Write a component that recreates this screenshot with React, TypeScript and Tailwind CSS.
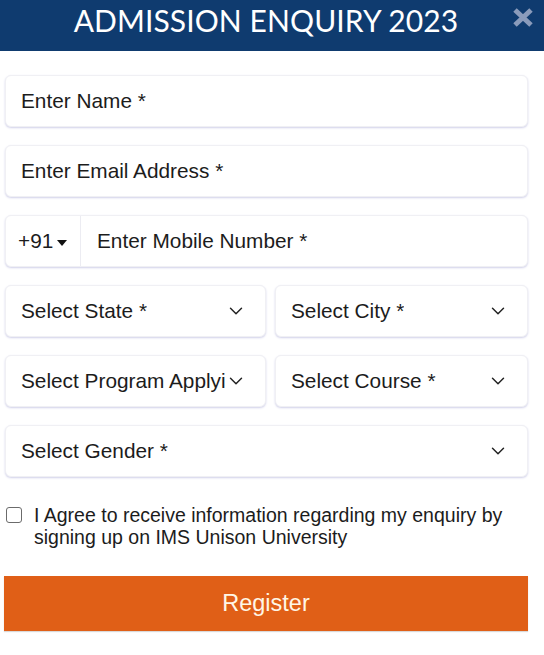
import { ChevronDown } from "lucide-react";

const field =
  "h-[52px] bg-white rounded-md border border-[#f0f0f4] shadow-[0_1px_2px_rgba(70,70,170,0.25)] flex items-center text-[20.8px] text-[#1c1c1c]";

const Select = ({ label, className = "" }: { label: string; className?: string }) => (
  <div className={`${field} pl-[15px] pr-[18px] justify-between ${className}`}>
    <span className="whitespace-nowrap overflow-hidden">{label}</span>
    <ChevronDown size={22} strokeWidth={1.6} className="shrink-0 text-[#222]" />
  </div>
);

const App = () => {
  return (
    <div className="w-[544px] h-[655px] bg-white font-['Liberation_Sans',Arial,sans-serif] overflow-hidden">
      <div className="h-[51px] bg-[#0f3b6f] relative flex justify-center pt-[1px]">
        <h1 className="font-['Lato',sans-serif] text-[30px] leading-[38px] text-white tracking-[0.1px] pr-[12px]">
          ADMISSION ENQUIRY 2023
        </h1>
        <svg
          className="absolute right-[10px] top-[7px]"
          width="22"
          height="21"
          viewBox="0 0 22 21"
        >
          <path d="M3 3 L19 18 M19 3 L3 18" stroke="#8a9bbb" strokeWidth="5" strokeLinecap="butt" />
        </svg>
      </div>

      <div className="pl-[5px] pr-[16px] pt-[24px] flex flex-col gap-[18px]">
        <div className={`${field} px-[15px]`}>Enter Name *</div>
        <div className={`${field} px-[15px]`}>Enter Email Address *</div>
        <div className={`${field}`}>
          <div className="w-[75px] h-full flex items-center pl-3 border-r border-[#ececf2] gap-[3px]">
            <span>+91</span>
            <svg width="12" height="8" viewBox="0 0 12 8" className="mt-[3px]">
              <path d="M1 1 L11 1 L6 7 Z" fill="#111" />
            </svg>
          </div>
          <span className="pl-[16px]">Enter Mobile Number *</span>
        </div>
        <div className="grid grid-cols-[261px_1fr] gap-[9px]">
          <Select label="Select State *" />
          <Select label="Select City *" />
        </div>
        <div className="grid grid-cols-[261px_1fr] gap-[9px]">
          <Select label="Select Program Applying For *" className="pr-[8px]" />
          <Select label="Select Course *" />
        </div>
        <Select label="Select Gender *" />

        <label className="flex items-start gap-3 mt-[9px] text-[19.5px] leading-[22px] text-[#1c1c1c]">
          <span className="mt-[3px] ml-[1px] w-[16px] h-[16px] shrink-0 rounded-[3px] border border-[#6b6b6b] bg-white" />
          <span>
            I Agree to receive information regarding my enquiry by signing up on IMS Unison
            University
          </span>
        </label>

        <button className="mt-[10px] -ml-[1px] h-[55px] bg-[#e05f17] text-[#fff6e6] text-[23.5px] shadow-[0_1px_1px_rgba(0,0,0,0.15)]">
          Register
        </button>
      </div>
    </div>
  );
};

export default App;
